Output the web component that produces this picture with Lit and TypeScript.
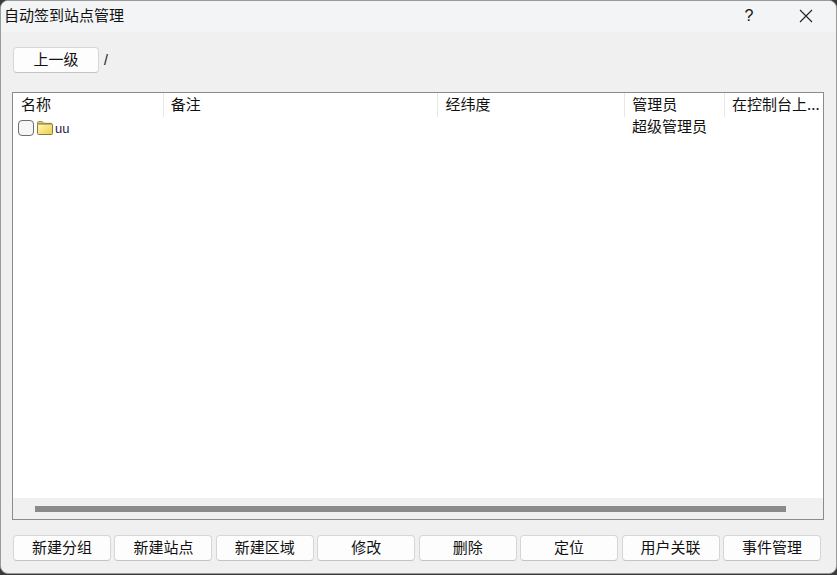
import { LitElement, html, css } from "lit";
import { customElement } from "lit/decorators.js";

const COLS = [
  { label: "名称", w: 151 },
  { label: "备注", w: 275 },
  { label: "经纬度", w: 187 },
  { label: "管理员", w: 100 },
  { label: "在控制台上...", w: 98 },
];
const ACTIONS = ["新建分组", "新建站点", "新建区域", "修改", "删除", "定位", "用户关联", "事件管理"];

@customElement("app-root")
export class AppRoot extends LitElement {
  static styles = css`
    :host {
      display: block;
      width: 837px;
      height: 575px;
      background: #3a3a3a;
      font-family: "Noto Sans CJK SC", "Liberation Sans", sans-serif;
      font-size: 15px;
      color: #111;
      overflow: hidden;
    }
    .win {
      width: 837px;
      height: 574px;
      box-sizing: border-box;
      background: #f0f0f0;
      border: 1px solid #9a9a9a;
      border-radius: 8px;
      display: flex;
      flex-direction: column;
      overflow: hidden;
    }
    .title {
      height: 31px;
      flex: none;
      background: #f3f4f5;
      display: flex;
      align-items: center;
      padding-left: 3px;
      line-height: 28px;
    }
    .title span { flex: 1; padding-bottom: 4px; }
    .tb {
      height: 31px;
      display: flex;
      align-items: center;
      justify-content: center;
      font-family: "Liberation Sans", sans-serif;
      font-size: 16px;
      box-sizing: border-box;
      padding-bottom: 1px;
    }
    .tb.help { width: 54px; }
    .tb.close { width: 60px; }
    .top {
      height: 26px;
      flex: none;
      margin: 15px 0 0 12px;
      display: flex;
      align-items: center;
      gap: 5px;
    }
    .btn {
      box-sizing: border-box;
      height: 26px;
      background: #fdfdfd;
      border: 1px solid #d6d6d6;
      border-bottom-color: #c4c4c4;
      border-radius: 4px;
      display: flex;
      align-items: center;
      justify-content: center;
      line-height: 1;
      padding-bottom: 3px;
    }
    .up { width: 86px; }
    .path { font-family: "Liberation Sans", sans-serif; font-size: 14px; }
    .table {
      box-sizing: border-box;
      width: 812px;
      height: 428px;
      margin: 19px 0 0 11px;
      flex: none;
      background: #fff;
      border: 1px solid #8a8a8f;
      display: flex;
      flex-direction: column;
      overflow: hidden;
    }
    .head, .row { display: flex; flex: none; }
    .head { height: 24px; }
    .hc {
      box-sizing: border-box;
      padding-left: 7px;
      border-right: 1px solid #e6e6e6;
      line-height: 22px;
      white-space: nowrap;
      overflow: hidden;
    }
    .hc:first-child { padding-left: 8px; }
    .hc:last-child { border-right: 0; }
    .row { height: 22px; align-items: center; }
    .c1 {
      width: 151px;
      display: flex;
      align-items: center;
      padding-left: 5px;
      box-sizing: border-box;
    }
    .check {
      box-sizing: border-box;
      width: 16px;
      height: 16px;
      background: #f6f6f6;
      border: 1px solid #6f6f6f;
      border-radius: 4px;
      margin-right: 3px;
    }
    .name { font-family: "Liberation Sans", sans-serif; font-size: 13px; margin-left: 2px; color: #2a1a4a; }
    .spacer { width: 462px; flex: none; }
    .admin { padding-left: 6px; line-height: 20px; padding-bottom: 4px; }
    .body { flex: 1; }
    .hscroll {
      height: 21px;
      flex: none;
      background: #f0f0f0;
      display: flex;
      align-items: center;
      padding-left: 22px;
    }
    .thumb { width: 751px; height: 6px; background: #8a8a8a; }
    .actions {
      margin: 15px 0 0 12px;
      display: flex;
      flex: none;
    }
    .actions .btn { width: 98px; padding-bottom: 4px; }
    .actions .btn + .btn { margin-left: 3.43px; }
  `;

  render() {
    return html`<div class="win">
      <div class="title">
        <span>自动签到站点管理</span>
        <div class="tb help">?</div>
        <div class="tb close">
          <svg width="14" height="14" viewBox="0 0 14 14"><path d="M1 1 13 13M13 1 1 13" stroke="#222" stroke-width="1.1" fill="none"/></svg>
        </div>
      </div>
      <div class="top">
        <div class="btn up">上一级</div>
        <div class="path">/</div>
      </div>
      <div class="table">
        <div class="head">
          ${COLS.map((c) => html`<div class="hc" style="width:${c.w}px">${c.label}</div>`)}
        </div>
        <div class="row">
          <div class="c1">
            <div class="check"></div>
            <svg width="16" height="14" viewBox="0 0 16 14">
              <defs>
                <linearGradient id="fg" x1="0" y1="0" x2="1" y2="1">
                  <stop offset="0" stop-color="#fffbb0"/>
                  <stop offset="1" stop-color="#eccb4e"/>
                </linearGradient>
              </defs>
              <path d="M.5 3V1.8C.5 1 1 .5 1.8.5h3.4l1.6 1.8h7.4c.5 0 .8.4.8.8V3Z" fill="#e8cf66" stroke="#9c8f55"/>
              <rect x=".5" y="3" width="15" height="10.5" rx="1" fill="url(#fg)" stroke="#857a48"/>
            </svg>
            <span class="name">uu</span>
          </div>
          <div class="spacer"></div>
          <div class="admin">超级管理员</div>
        </div>
        <div class="body"></div>
        <div class="hscroll"><div class="thumb"></div></div>
      </div>
      <div class="actions">
        ${ACTIONS.map((a) => html`<div class="btn">${a}</div>`)}
      </div>
    </div>`;
  }
}
